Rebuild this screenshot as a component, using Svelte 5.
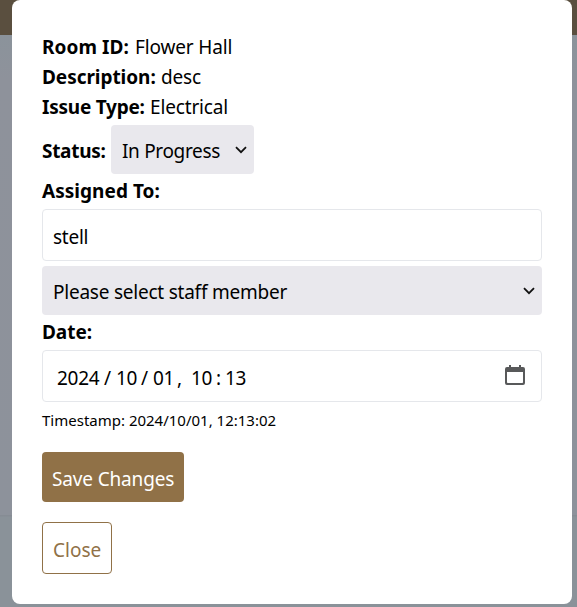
<script>
  let details = [
    { label: 'Room ID:', value: 'Flower Hall', width: 87, spacing: 0.08 },
    { label: 'Description:', value: 'desc', width: 113, spacing: -0.05 },
    { label: 'Issue Type:', value: 'Electrical', width: 102, spacing: -0.23 }
  ];
  let dateParts = [
    { text: '2024', width: 47 },
    { text: '/', width: 12 },
    { text: '10', width: 25 },
    { text: '/', width: 12 },
    { text: '01', width: 24 },
    { text: ',', width: 14 },
    { text: '10', width: 25 },
    { text: ':', width: 9 },
    { text: '13', width: 24 }
  ];
</script>

{#snippet chevron()}
  <svg class="chevron" width="12" height="8" viewBox="0 0 12 8"><path d="M1 1.2 6 6.2 11 1.2" fill="none" stroke="#111" stroke-width="1.8" /></svg>
{/snippet}

<div class="page">
  <main class="modal">
    {#each details as item}
      <div class="line"><b style:width="{item.width}px" style:letter-spacing="{item.spacing}px">{item.label}</b><span class="value">{item.value}</span></div>
    {/each}
    <div class="line status"><b class="status-label">Status:</b><button class="select short"><span class="progress">In Progress</span>{@render chevron()}</button></div>
    <div class="line title"><b class="assigned">Assigned To:</b></div>
    <div class="field"><span class="name">stell</span></div>
    <button class="select wide"><span class="placeholder">Please select staff member</span>{@render chevron()}</button>
    <div class="line title"><b>Date:</b></div>
    <div class="field date">
      {#each dateParts as part}<span style:width="{part.width}px">{part.text}</span>{/each}
      <svg class="calendar" width="20" height="20" viewBox="0 0 20 20">
        <path fill="#58595a" fill-rule="evenodd" d="M4 0h2v2h8V0h2v2h2a2 2 0 0 1 2 2v14a2 2 0 0 1-2 2H2a2 2 0 0 1-2-2V4a2 2 0 0 1 2-2h2zM2 7v10.2q0 .8.8.8h14.4q.8 0 .8-.8V7z" />
      </svg>
    </div>
    <div class="timestamp">Timestamp: 2024/10/01, 12:13:02</div>
    <button class="save">Save Changes</button>
    <button class="close">Close</button>
  </main>
</div>

<style>
  .page {
    box-sizing: border-box;
    width: 577px;
    height: 607px;
    padding: 0 5px 3px 12px;
    overflow: hidden;
    background: linear-gradient(#5a4f3f 0 35px, #8b939b 35px, #8e929b 80px, #8d929b 515px, #868c94 515px 516px, #8a9299 517px);
    font: 19px/30px "Noto Sans", sans-serif;
    color: #000;
  }
  .modal {
    box-sizing: border-box;
    height: 604px;
    padding: 32px 30px 30px;
    border-radius: 8px;
    background: #fff;
    display: flex;
    flex-direction: column;
    align-items: flex-start;
  }
  .line { display: flex; height: 30px; white-space: nowrap; }
  b { font-weight: 700; letter-spacing: -0.05px; }
  b.status-label { letter-spacing: -0.3px; }
  b.assigned { letter-spacing: 0.04px; }
  .value { margin-left: 6px; letter-spacing: -0.15px; }
  .status { height: 49px; margin-top: 3px; align-items: center; }
  .status b { width: 69px; padding-top: 3px; }
  .title { margin-top: 2px; }
  button { box-sizing: border-box; margin: 0; font: inherit; color: inherit; border: 0; border-radius: 4px; text-align: left; white-space: nowrap; }
  .select { display: flex; align-items: center; justify-content: space-between; height: 49px; padding: 3px 7px 0 11px; background: #e9e8ed; letter-spacing: -0.23px; }
  .progress { letter-spacing: -0.33px; }
  .name { letter-spacing: -0.25px; }
  .short { width: 143px; }
  .wide { width: 500px; margin-top: 5px; }
  .chevron { margin-top: -2px; }
  .field { box-sizing: border-box; display: flex; align-items: center; width: 500px; height: 52px; margin-top: 3px; padding: 4px 16px 0 10px; border: 1px solid #e5e7eb; border-radius: 4px; }
  .date { padding-left: 14px; letter-spacing: -0.3px; }
  .calendar { margin: -7px 0 0 auto; }
  .timestamp { margin-top: 6px; height: 25px; font-size: 15px; line-height: 24px; white-space: nowrap; }
  .save { width: 142px; height: 50px; margin-top: 19px; padding: 4px 10px 0; background: #907147; color: #fff; letter-spacing: -0.15px; }
  .close { width: 70px; height: 52px; margin-top: 20px; padding: 4px 10px 0; background: #fff; border: 1px solid #907147; color: #907147; }
</style>
